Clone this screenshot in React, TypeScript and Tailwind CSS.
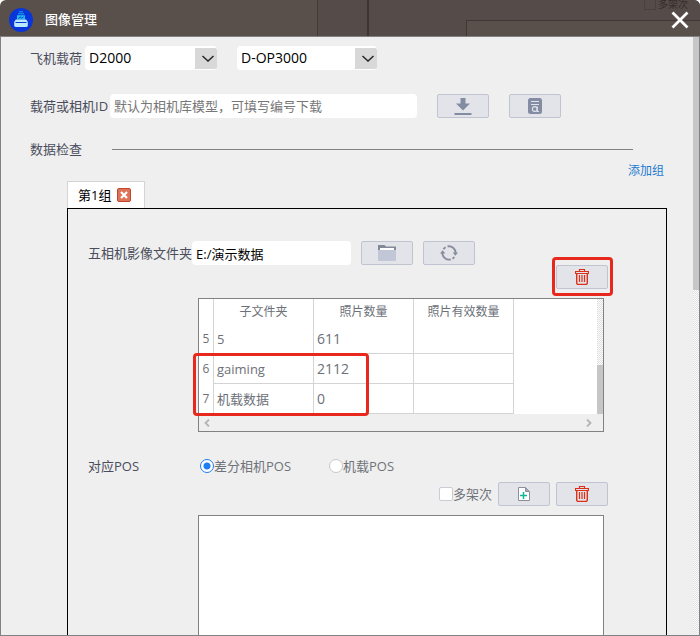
import { useState, type ReactNode } from "react"

/* ---------------------------------- */
/*              Types                 */
/* ---------------------------------- */

interface FolderRow {
  index: number
  folder: string
  photos: number
}

interface SelectBoxProps {
  label: string
  value: string
  options: string[]
  className: string
  id?: string
  onChange: (value: string) => void
}

interface ToolButtonProps {
  label: string
  children: ReactNode
}

/* ---------------------------------- */
/*             Constants              */
/* ---------------------------------- */

const FOLDERS: FolderRow[] = [
  { index: 5, folder: "5", photos: 611 },
  { index: 6, folder: "gaiming", photos: 2112 },
  { index: 7, folder: "机载数据", photos: 0 },
]

const POS_SOURCES = [
  { id: "camera", label: "差分相机POS", width: "w-[129px]" },
  { id: "onboard", label: "机载POS", width: "w-[80px]" },
]

const TRACK =
  "bg-[repeating-conic-gradient(#ffffff_0_25%,#dedede_0_50%)] bg-[length:2px_2px]"

/* ---------------------------------- */
/*               Icons                */
/* ---------------------------------- */

function LogoIcon() {
  return (
    <svg viewBox="0 0 24 24" className="size-6" aria-hidden="true">
      <circle cx="12" cy="12" r="12" fill="#0a35d8" />
      <path d="M10 3.800h4M9 5.800h6" stroke="#14a5f0" strokeWidth="1" />
      <path d="M8 7.200h8v4.300H8z" fill="#22bdf2" />
      <path d="M9.500 10.500l1.800-1.500 1.500 1.200 1.700-1.400" stroke="#0a35d8" strokeWidth="1" fill="none" />
      <path d="M6.800 11.500h10.400l1.600 2.500v3.600a1.400 1.400 0 0 1-1.400 1.400H6.600a1.400 1.400 0 0 1-1.400-1.400V14z" fill="#b9e9fd" />
      <path d="M6.500 14.500h11" stroke="#0a35d8" strokeWidth="1.200" />
    </svg>
  )
}

function CloseIcon() {
  return (
    <svg viewBox="0 0 18 18" className="size-[18px]" aria-hidden="true">
      <path d="M1.500 1.500l15 15M16.500 1.500l-15 15" stroke="#fff" strokeWidth="2.800" />
    </svg>
  )
}

function DownloadIcon() {
  return (
    <svg viewBox="0 0 18 18" className="size-[18px]" aria-hidden="true">
      <path d="M6.500 1h5v5.500H16L9 13.500 2 6.500h4.500z" fill="#838ca3" />
      <rect x="0.500" y="16" width="17" height="2" fill="#838ca3" />
    </svg>
  )
}

function ReportIcon() {
  return (
    <svg viewBox="0 0 14 16" className="h-4 w-[14px]" aria-hidden="true">
      <rect width="14" height="16" rx="2.500" fill="#838ca3" />
      <path d="M3 3.500h8M3 6.500h8" stroke="#e2e5ec" strokeWidth="1" />
      <circle cx="6.800" cy="11" r="2.400" fill="none" stroke="#e2e5ec" strokeWidth="1.100" />
      <path d="M9.200 8.500v5h1.800" stroke="#e2e5ec" strokeWidth="1.100" fill="none" />
    </svg>
  )
}

function FolderIcon() {
  return (
    <svg viewBox="0 0 18 16" className="h-4 w-[18px]" aria-hidden="true">
      <path d="M0 0h6.500l1.500 1.500h10V6H0z" fill="#838999" />
      <rect x="2" y="3" width="14" height="3" fill="#fff" />
      <path d="M0 5h18v10a1 1 0 0 1-1 1H1a1 1 0 0 1-1-1z" fill="#c2c7d8" />
    </svg>
  )
}

function RefreshIcon() {
  return (
    <svg viewBox="0 0 18 16" className="h-4 w-[18px]" aria-hidden="true">
      <g fill="none" stroke="#878d9c" strokeWidth="1.900">
        <path d="M7.500 1.400A6.700 6.700 0 0 1 15.600 8" />
        <path d="M14.300 12A6.700 6.700 0 0 1 12.500 13.700" />
        <path d="M10.800 14.400A6.700 6.700 0 0 1 2.400 8" />
        <path d="M3.500 4.200A6.700 6.700 0 0 1 5.600 2.200" />
      </g>
      <path d="M12.600 7.500h5.400L15.400 10.800zM0 8.500h5.400L2.600 5.200z" fill="#878d9c" />
    </svg>
  )
}

function TrashIcon() {
  return (
    <svg viewBox="0 0 14 16" className="h-4 w-[14px]" aria-hidden="true">
      <g fill="none" stroke="#dc3018">
        <path d="M4.500 2.500v-2h5v2" strokeWidth="1.200" />
        <path d="M0.500 4.500v-2h13v2z" strokeWidth="1.200" />
        <path d="M1.700 4.500v9.500a1.500 1.500 0 0 0 1.500 1.500h7.600a1.500 1.500 0 0 0 1.500-1.500V4.500" strokeWidth="1.400" />
        <path d="M4.500 6v7M7 6v7M9.500 6v7" strokeWidth="1.200" />
      </g>
    </svg>
  )
}

function AddFileIcon() {
  return (
    <svg viewBox="0 0 12 14" className="h-[14px] w-3" aria-hidden="true">
      <path d="M0.500 0.500h7l4 4v9h-11z" fill="#fff" stroke="#8a909f" />
      <path d="M7.500 0.500v4h4z" fill="#a4a9b8" stroke="#8a909f" />
      <path d="M5.500 5v7M2 8.500h7" stroke="#12b896" strokeWidth="1.500" />
    </svg>
  )
}

/* ---------------------------------- */
/*             Controls               */
/* ---------------------------------- */

function SelectBox({ label, value, options, className, id, onChange }: SelectBoxProps) {
  return (
    <div className={`relative h-6 rounded bg-white ${className}`}>
      <select
        id={id}
        aria-label={label}
        value={value}
        onChange={(e) => onChange(e.target.value)}
        className="h-6 w-full appearance-none bg-transparent pl-1 text-sm text-black outline-none"
      >
        {options.map((option) => (
          <option key={option}>{option}</option>
        ))}
      </select>
      <span className="pointer-events-none absolute top-0.5 right-0 flex h-[21px] w-[22px] items-center justify-end rounded-r-xs bg-[#d8d8d8] pr-0.5">
        <svg viewBox="0 0 14 8" className="h-2 w-[14px]" aria-hidden="true">
          <path d="M1.500 1l5.500 5 5.500-5" fill="none" stroke="#222" strokeWidth="1.400" />
        </svg>
      </span>
    </div>
  )
}

function ToolButton({ label, children }: ToolButtonProps) {
  return (
    <button
      type="button"
      aria-label={label}
      className="flex h-6 w-[52px] shrink-0 items-center justify-center rounded-xs border border-[#c0c4d0] bg-[#e2e4e9] hover:bg-[#d9dce3]"
    >
      {children}
    </button>
  )
}

function TitleBar() {
  return (
    <header className="relative flex h-[37px] shrink-0 items-center justify-between overflow-hidden rounded-t-md border-b border-[#808285] bg-[#594f4b] pr-[11px] pl-[9px]">
      {/* Outlines of the dimmed window behind */}
      <div aria-hidden="true" className="absolute inset-0">
        <div className="absolute inset-y-0 right-0 left-[317px] border-l border-[#443a37] bg-[#554b48]" />
        <div className="absolute inset-y-0 left-[367px] border-l-2 border-[#3e3532]" />
        <div className="absolute top-5 right-0 bottom-0 left-[466px] border-t border-l border-[#403734] bg-[#594f4b]" />
        <div className="absolute -top-1 right-3 flex items-center gap-0.5 text-[10px] leading-4 text-[#352c2a]">
          <span className="size-3 border border-[#4a413e]" />
          多架次
        </div>
      </div>

      <div className="relative flex items-center gap-3 pt-1">
        <LogoIcon />
        <h1 className="pb-0.5 text-[13px] font-medium text-white">图像管理</h1>
      </div>
      <button type="button" aria-label="关闭" className="relative pt-1">
        <CloseIcon />
      </button>
    </header>
  )
}

function FolderTable() {
  return (
    <div className="relative mr-[62px] ml-[110px] border border-[#808285] bg-white">
      <div className="flex h-[115px] justify-between">
        <table className="h-[115px] w-[315px] table-fixed border-separate border-spacing-0 text-[13px] text-[#6c7078]">
          <colgroup>
            <col className="w-[15px]" />
            <col className="w-[100px]" />
            <col className="w-[100px]" />
            <col className="w-[100px]" />
          </colgroup>
          <thead>
            <tr className="h-[25px] text-xs">
              <td className="border-r border-[#d4d4d4]" />
              <th className="border-r border-[#d4d4d4] p-0 font-normal">子文件夹</th>
              <th className="border-r border-[#d4d4d4] p-0 font-normal">照片数量</th>
              <th className="border-r border-[#d4d4d4] p-0 font-normal">照片有效数量</th>
            </tr>
          </thead>
          <tbody>
            {FOLDERS.map((row) => (
              <tr key={row.index} className="h-[30px]">
                <th className="border-r border-[#d4d4d4] p-0 text-xs font-normal">{row.index}</th>
                <td className="border-r border-b border-[#d4d4d4] p-0 pl-[3px]">{row.folder}</td>
                <td className="border-r border-b border-[#d4d4d4] p-0 pl-[3px] text-sm">{row.photos}</td>
                <td className="border-r border-b border-[#d4d4d4] p-0" />
              </tr>
            ))}
          </tbody>
        </table>
        <div className={`flex w-1.5 flex-col justify-end ${TRACK}`}>
          <div className="h-[49px] bg-[#c6c6c6]" />
        </div>
      </div>
      <div className="flex h-[17px] items-center justify-between bg-[#efefef] pr-[11px] pl-[5px]">
        <svg viewBox="0 0 6 8" className="h-2 w-1.5" aria-hidden="true">
          <path d="M5 0.500L1.500 4 5 7.500" fill="none" stroke="#b4b4b4" strokeWidth="1.800" />
        </svg>
        <svg viewBox="0 0 6 8" className="h-2 w-1.5" aria-hidden="true">
          <path d="M1 0.500L4.500 4 1 7.500" fill="none" stroke="#b4b4b4" strokeWidth="1.800" />
        </svg>
      </div>
      {/* Marks the two extra folders */}
      <div className="pointer-events-none absolute top-[54px] -left-1.5 h-[63px] w-[176px] rounded-sm border-3 border-[#e8281c]" />
    </div>
  )
}

/* ---------------------------------- */
/*               Page                 */
/* ---------------------------------- */

export default function App() {
  const [aircraft, setAircraft] = useState("D2000")
  const [payload, setPayload] = useState("D-OP3000")
  const [cameraId, setCameraId] = useState("")
  const [path, setPath] = useState("E:/演示数据")
  const [source, setSource] = useState("camera")
  const [multi, setMulti] = useState(false)

  return (
    <div className="flex min-h-screen flex-col bg-white font-['Open_Sans','Noto_Sans_CJK_SC',sans-serif] text-[13px] leading-5 text-[#4a4d5c]">
      <TitleBar />

      <div className="flex flex-1 border-x border-b border-[#808285] bg-[#efefef]">
        <main className="flex min-w-0 flex-1 flex-col pt-[9px]">
          <div className="flex items-center pl-[29px]">
            <label htmlFor="aircraft" className="w-[55px] shrink-0">飞机载荷</label>
            <SelectBox
              id="aircraft"
              label="飞机载荷"
              value={aircraft}
              options={["D2000", "D200"]}
              className="w-[132px]"
              onChange={setAircraft}
            />
            <SelectBox
              label="载荷型号"
              value={payload}
              options={["D-OP3000", "D-CAM2000"]}
              className="ml-5 w-[140px]"
              onChange={setPayload}
            />
          </div>

          <div className="mt-6 flex items-center pl-[29px]">
            <label htmlFor="camera-id" className="w-20 shrink-0 whitespace-nowrap">载荷或相机ID</label>
            <input
              id="camera-id"
              value={cameraId}
              onChange={(e) => setCameraId(e.target.value)}
              placeholder="默认为相机库模型，可填写编号下载"
              className="h-6 w-[307px] rounded bg-white px-1 text-black outline-none placeholder:text-[#777]"
            />
            <div className="ml-5 flex gap-5">
              <ToolButton label="下载"><DownloadIcon /></ToolButton>
              <ToolButton label="查看"><ReportIcon /></ToolButton>
            </div>
          </div>

          <div className="mt-[21px] flex items-center pr-[60px] pl-[29px]">
            <h2 className="w-[82px] shrink-0">数据检查</h2>
            <hr className="flex-1 border-[#808285]" />
          </div>
          <div className="mt-0.5 flex justify-end pr-[29px]">
            <a href="#add" className="text-xs leading-5 text-[#1e7ad2]">添加组</a>
          </div>

          <div className="flex h-[27px] pl-[66px]">
            <div className="flex w-[78px] items-center gap-1.5 border border-b-0 border-[#d4d4d4] bg-white pl-2.5 whitespace-nowrap text-black">
              第1组
              <button
                type="button"
                aria-label="关闭第1组"
                className="flex size-[14px] shrink-0 items-center justify-center rounded-xs border border-[#c4452c] bg-[#dd7358]"
              >
                <svg viewBox="0 0 8 8" className="size-2" aria-hidden="true">
                  <path d="M1 1l6 6M7 1L1 7" stroke="#fff" strokeWidth="2.200" />
                </svg>
              </button>
            </div>
          </div>

          <section className="mr-[26px] ml-[66px] flex flex-1 flex-col border border-b-0 border-black pt-8 pl-5">
            <div className="flex items-center">
              <label htmlFor="folder" className="w-[104px] shrink-0 whitespace-nowrap">五相机影像文件夹</label>
              <input
                id="folder"
                value={path}
                onChange={(e) => setPath(e.target.value)}
                className="h-6 w-[159px] rounded bg-white px-1 text-black outline-none"
              />
              <div className="ml-2.5 flex gap-2.5">
                <ToolButton label="选择文件夹"><FolderIcon /></ToolButton>
                <ToolButton label="刷新"><RefreshIcon /></ToolButton>
              </div>
            </div>

            <div className="mb-[9px] flex justify-end pr-[58px]">
              <div className="relative">
                <ToolButton label="删除文件夹"><TrashIcon /></ToolButton>
                <div className="pointer-events-none absolute -top-2 -right-[5px] -bottom-[7px] -left-1 rounded-sm border-3 border-[#e8281c]" />
              </div>
            </div>

            <FolderTable />

            <fieldset className="mt-6 flex items-center">
              <legend className="float-left w-[112px]">对应POS</legend>
              {POS_SOURCES.map(({ id, label, width }) => (
                <label key={id} className={`flex items-center whitespace-nowrap text-[#70737a] ${width}`}>
                  <input
                    type="radio"
                    name="pos"
                    checked={source === id}
                    onChange={() => setSource(id)}
                    className="size-[14px] shrink-0 appearance-none rounded-full border border-[#c8c8c8] bg-white checked:border-[#1e7df0] checked:bg-[radial-gradient(#1e7df0_3px,#fff_4px)]"
                  />
                  {label}
                </label>
              ))}
            </fieldset>

            <div className="mt-1.5 flex items-center justify-end gap-1.5 pr-[58px]">
              <label className="flex items-center text-[#70737a]">
                <input
                  type="checkbox"
                  checked={multi}
                  onChange={(e) => setMulti(e.target.checked)}
                  className="size-[14px] appearance-none rounded-xs border border-[#c8ccd4] bg-white checked:bg-[#1e7df0]"
                />
                多架次
              </label>
              <ToolButton label="添加POS文件"><AddFileIcon /></ToolButton>
              <ToolButton label="删除POS文件"><TrashIcon /></ToolButton>
            </div>

            <textarea
              aria-label="POS文件"
              className="mt-[9px] mr-[62px] ml-[110px] min-h-[120px] flex-1 resize-none border border-b-0 border-[#808285] bg-white p-1 outline-none"
            />
          </section>
        </main>

        {/* Page scrollbar */}
        <div className={`w-1.5 shrink-0 ${TRACK}`}>
          <div className="h-[253px] bg-[#c6c6c6]" />
        </div>
      </div>
    </div>
  )
}
